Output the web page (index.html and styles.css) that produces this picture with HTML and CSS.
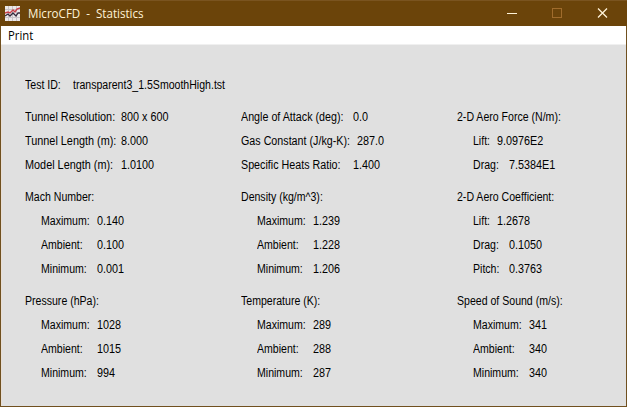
FILE: index.html
```
<!DOCTYPE html>
<html lang="en">
<head>
<meta charset="utf-8">
<title>MicroCFD - Statistics</title>
<link rel="stylesheet" href="styles.css">
</head>
<body>
<div class="window">
  <header class="titlebar">
    <svg class="app-icon" width="15" height="15" viewBox="0 0 15 15">
      <rect width="15" height="15" fill="#ece8e8"/>
      <path d="M3.5 0v15M7.5 0v15M11.5 0v15M0 3.5h15M0 11.5h15" stroke="#c9c3c8" fill="none"/>
      <path d="M0 7l3-1 2 1 3-3 2 2 2-3 3-1" stroke="#c83e48" stroke-width="1.4" fill="none"/>
      <path d="M0 10l3-2 2 2 3-3 3 3 2-3 2 0" stroke="#33283c" stroke-width="1.3" fill="none"/>
    </svg>
    <h1 class="title"><span>MicroCFD&nbsp; -&nbsp; Statistics</span></h1>
    <svg class="controls" width="120" height="26" viewBox="0 0 120 26" fill="none">
      <path d="M0 13.5h10" stroke="#fff3d8"/>
      <rect x="45.5" y="8.5" width="9" height="9" stroke="#a06c2c"/>
      <path d="M91 8.5l9 9M100 8.5l-9 9" stroke="#fff3d8" stroke-width="1.3"/>
    </svg>
  </header>
  <nav class="menu"><span>Print</span></nav>
  <main class="panel">
    <div class="row test"><b>Test ID:</b><i>transparent3_1.5SmoothHigh.tst</i></div>
    <div class="grid">
      <section class="wide">
        <div class="row"><b>Tunnel Resolution:</b><i>800 x 600</i></div>
        <div class="row"><b>Tunnel Length (m):</b><i>8.000</i></div>
        <div class="row"><b>Model Length (m):</b><i>1.0100</i></div>
      </section>
      <section class="wider">
        <div class="row"><b>Angle of Attack (deg):</b><i>0.0</i></div>
        <div class="row gas"><b>Gas Constant (J/kg-K):</b><i>287.0</i></div>
        <div class="row"><b>Specific Heats Ratio:</b><i>1.400</i></div>
      </section>
      <section>
        <div class="row"><b>2-D Aero Force (N/m):</b></div>
        <div class="row sub lift"><b>Lift:</b><i>9.0976E2</i></div>
        <div class="row sub drag"><b>Drag:</b><i>7.5384E1</i></div>
      </section>
      <section>
        <div class="row"><b>Mach Number:</b></div>
        <div class="row sub"><b>Maximum:</b><i>0.140</i></div>
        <div class="row sub"><b>Ambient:</b><i>0.100</i></div>
        <div class="row sub"><b>Minimum:</b><i>0.001</i></div>
      </section>
      <section>
        <div class="row"><b>Density (kg/m^3):</b></div>
        <div class="row sub"><b>Maximum:</b><i>1.239</i></div>
        <div class="row sub"><b>Ambient:</b><i>1.228</i></div>
        <div class="row sub"><b>Minimum:</b><i>1.206</i></div>
      </section>
      <section>
        <div class="row"><b>2-D Aero Coefficient:</b></div>
        <div class="row sub lift"><b>Lift:</b><i>1.2678</i></div>
        <div class="row sub drag"><b>Drag:</b><i>0.1050</i></div>
        <div class="row sub drag"><b>Pitch:</b><i>0.3763</i></div>
      </section>
      <section>
        <div class="row"><b>Pressure (hPa):</b></div>
        <div class="row sub"><b>Maximum:</b><i>1028</i></div>
        <div class="row sub"><b>Ambient:</b><i>1015</i></div>
        <div class="row sub"><b>Minimum:</b><i>994</i></div>
      </section>
      <section>
        <div class="row"><b>Temperature (K):</b></div>
        <div class="row sub"><b>Maximum:</b><i>289</i></div>
        <div class="row sub"><b>Ambient:</b><i>288</i></div>
        <div class="row sub"><b>Minimum:</b><i>287</i></div>
      </section>
      <section>
        <div class="row"><b>Speed of Sound (m/s):</b></div>
        <div class="row sub"><b>Maximum:</b><i>341</i></div>
        <div class="row sub"><b>Ambient:</b><i>340</i></div>
        <div class="row sub"><b>Minimum:</b><i>340</i></div>
      </section>
    </div>
  </main>
</div>
</body>
</html>
```
FILE: styles.css
```
* { box-sizing: border-box; }
body { margin: 0; overflow: hidden; }
.window {
  width: 627px;
  height: 407px;
  display: flex;
  flex-direction: column;
  border: 1px solid #70501f;
  border-top: 0;
  background: #e0e0e0;
}
.titlebar {
  height: 26px;
  flex: none;
  margin: 0 -1px;
  padding-left: 5px;
  display: flex;
  align-items: center;
  background: #6b440a;
  border-top: 1px solid #7a5420;
}
.app-icon { flex: none; margin-top: -1px; }
.title {
  flex: 1;
  margin: 0 0 0 8px;
  font: 12px/24px "Open Sans", "Noto Sans", sans-serif;
  color: #fff3d8;
  white-space: pre;
}
.title span { display: inline-block; transform: scaleX(.965); transform-origin: 0 50%; }
.controls { flex: none; margin-top: -1px; }
.menu {
  height: 19px;
  flex: none;
  padding-left: 7px;
  background: #fff;
  border-bottom: 1px solid #f0f0f0;
  font: 12px/19px "Open Sans", "Noto Sans", sans-serif;
  color: #000;
}
.menu span { display: inline-block; transform: scaleX(.94); transform-origin: 0 50%; }
.panel {
  flex: 1;
  padding: 28px 0 0 23.4px;
  border-left: 1px solid #e9dfd6;
  font: 12px/24px "Liberation Sans", Arial, sans-serif;
  color: #000;
}
.grid {
  display: grid;
  grid-template-columns: 216px 216px 1fr;
  row-gap: 8px;
  margin-top: 8px;
}
.row { display: flex; height: 24px; white-space: nowrap; }
.row b {
  flex: none;
  width: 56px;
  font-weight: 400;
  transform: scaleX(.88);
  transform-origin: 0 50%;
}
.row i {
  font-style: normal;
  transform: scaleX(.9);
  transform-origin: 0 50%;
}
.sub { padding-left: 16px; }
.test b { width: 48px; }
.test i { transform: scaleX(.88); }
.wide b { width: 96px; transform: scaleX(.905); }
.wider b { width: 112px; transform: scaleX(.893); }
.wider .gas b { width: 116px; }
.lift b { width: 24px; }
.drag b { width: 36px; }
```
